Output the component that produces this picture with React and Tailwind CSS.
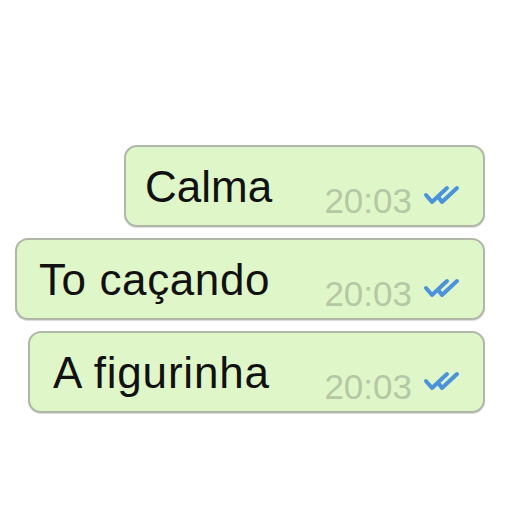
export default function App() {
  const msgs = [
    { text: "Calma", w: "w-[361px]", pl: "pl-[19px]", t: "tracking-[0px]" },
    { text: "To caçando", w: "w-[470px]", pl: "pl-[22px]", t: "tracking-[0.6px]" },
    { text: "A figurinha", w: "w-[457px]", pl: "pl-[23px]", t: "tracking-[0.8px]" },
  ];
  return (
    <div className="w-[512px] h-[512px] bg-white flex flex-col items-end pt-[145px] pr-[27px] gap-[11px]" style={{ fontFamily: '"Liberation Sans", Arial, sans-serif' }}>
      {msgs.map((m, i) => (
        <div key={i} className={`${m.w} ${m.pl} h-[82px] rounded-[13px] border-2 border-[#b0b7a8] bg-[#dff7c8] flex items-start justify-between pr-[21px] shadow-[0_1px_1px_rgba(0,0,0,0.15)]`}>
          <span className={`mt-[18px] text-[44px] leading-[44px] text-[#111111] ${m.t}`}>{m.text}</span>
          <div className="mt-[36px] flex items-start">
            <span className="text-[35px] leading-[35px] text-[#b5c7a5]">20:03</span>
            <svg className="ml-[10px] mt-[2px]" width="40" height="22" viewBox="0 0 40 22" fill="none" stroke="#4a92dc" strokeWidth="4" strokeLinecap="round" strokeLinejoin="round">
              <path d="M4 10 L10 17 L25 3" />
              <path d="M17 13 L20 17 L35 3" />
            </svg>
          </div>
        </div>
      ))}
    </div>
  );
}
